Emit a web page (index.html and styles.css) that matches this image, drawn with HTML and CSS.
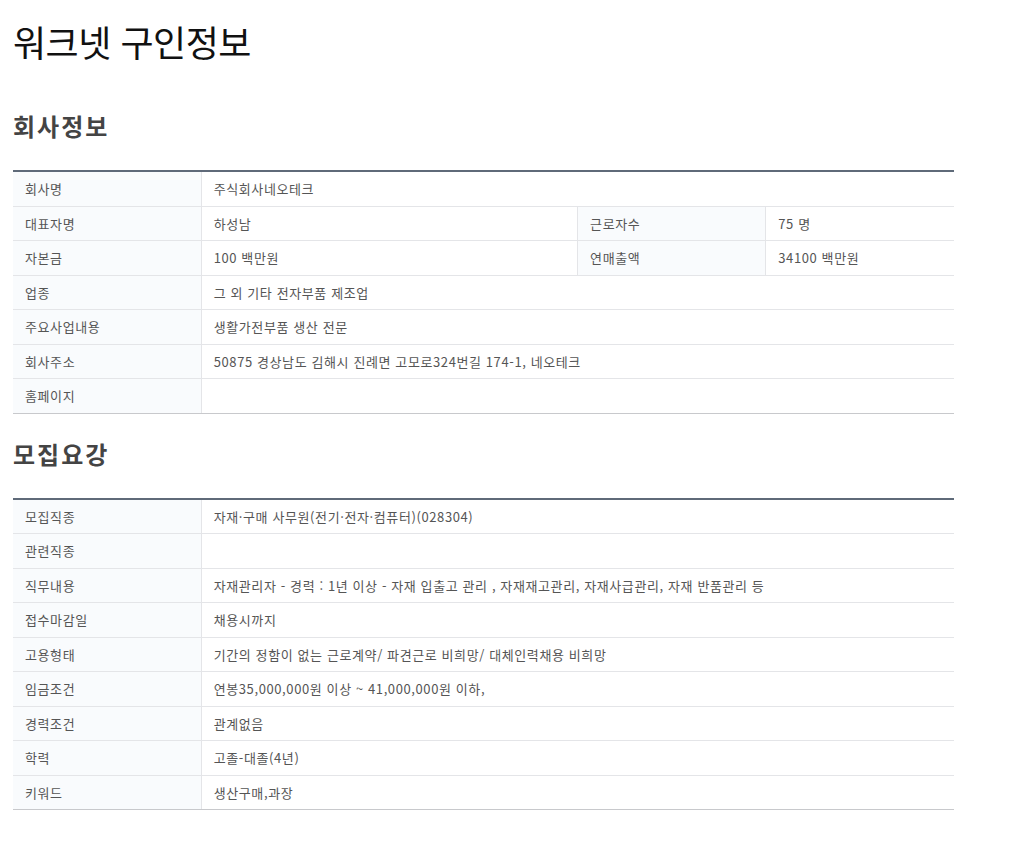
FILE: index.html
```html
<!DOCTYPE html>
<html lang="ko">
<head>
<meta charset="utf-8">
<title>워크넷 구인정보</title>
<link rel="stylesheet" href="styles.css">
</head>
<body>
<div class="page">
  <h1 class="title">워크넷 구인정보</h1>

  <h3 class="section-title first">회사정보</h3>
  <table class="info">
    <colgroup><col class="c20"><col class="c40"><col class="c20"><col class="c20"></colgroup>
    <tbody>
      <tr><th>회사명</th><td colspan="3">주식회사네오테크</td></tr>
      <tr><th>대표자명</th><td>하성남</td><th>근로자수</th><td>75 명</td></tr>
      <tr><th>자본금</th><td>100 백만원</td><th>연매출액</th><td>34100 백만원</td></tr>
      <tr><th>업종</th><td colspan="3">그 외 기타 전자부품 제조업</td></tr>
      <tr><th>주요사업내용</th><td colspan="3">생활가전부품 생산 전문</td></tr>
      <tr><th>회사주소</th><td colspan="3">50875 경상남도 김해시 진례면 고모로324번길 174-1, 네오테크</td></tr>
      <tr><th>홈페이지</th><td colspan="3"></td></tr>
    </tbody>
  </table>

  <h3 class="section-title">모집요강</h3>
  <table class="info">
    <colgroup><col class="c20"><col class="c80"></colgroup>
    <tbody>
      <tr><th>모집직종</th><td>자재·구매 사무원(전기·전자·컴퓨터)(028304)</td></tr>
      <tr><th>관련직종</th><td></td></tr>
      <tr><th>직무내용</th><td>자재관리자 - 경력 : 1년 이상 - 자재 입출고 관리 , 자재재고관리, 자재사급관리, 자재 반품관리 등</td></tr>
      <tr><th>접수마감일</th><td>채용시까지</td></tr>
      <tr><th>고용형태</th><td>기간의 정함이 없는 근로계약/ 파견근로 비희망/ 대체인력채용 비희망</td></tr>
      <tr><th>임금조건</th><td>연봉35,000,000원 이상 ~ 41,000,000원 이하,</td></tr>
      <tr><th>경력조건</th><td>관계없음</td></tr>
      <tr><th>학력</th><td>고졸-대졸(4년)</td></tr>
      <tr><th>키워드</th><td>생산구매,과장</td></tr>
    </tbody>
  </table>
</div>
</body>
</html>
```

FILE: styles.css
```css
html, body {
  margin: 0;
  padding: 0;
  background: #ffffff;
}

body {
  font-family: "Noto Sans CJK KR", "Noto Sans", sans-serif;
  color: #333;
}

.page {
  padding: 0 13px 30px 13px;
  width: 941px;
}

.title {
  margin: 21px 0 0 0;
  font-size: 36px;
  line-height: 40px;
  font-weight: 400;
  color: #111;
  letter-spacing: -0.5px;
}

.section-title {
  margin: 27px 0 31px 0;
  font-size: 24px;
  line-height: 26px;
  font-weight: 700;
  color: #444;
  letter-spacing: 2px;
}

.section-title.first {
  margin-top: 52px;
}

.info {
  width: 941px;
  border-collapse: collapse;
  table-layout: fixed;
  border-top: 2px solid #5f6a79;
  border-bottom: 1px solid #c8c9cc;
  font-size: 13px;
  color: #555;
}

.c20 { width: 20%; }
.c40 { width: 40%; }
.c80 { width: 80%; }

.info th,
.info td {
  padding: 7px 12px;
  line-height: 19.5px;
  text-align: left;
  font-weight: 400;
  border-bottom: 1px solid #e4e5e8;
  vertical-align: middle;
  letter-spacing: 0.6px;
}

.info th {
  background: #f9fbfd;
  border-right: 1px solid #e4e5e8;
}

.info td {
  background: #ffffff;
  border-right: 1px solid #e4e5e8;
}

.info td:last-child {
  border-right: none;
}

.info tr:last-child th,
.info tr:last-child td {
  border-bottom: 1px solid #c8c9cc;
}
```
